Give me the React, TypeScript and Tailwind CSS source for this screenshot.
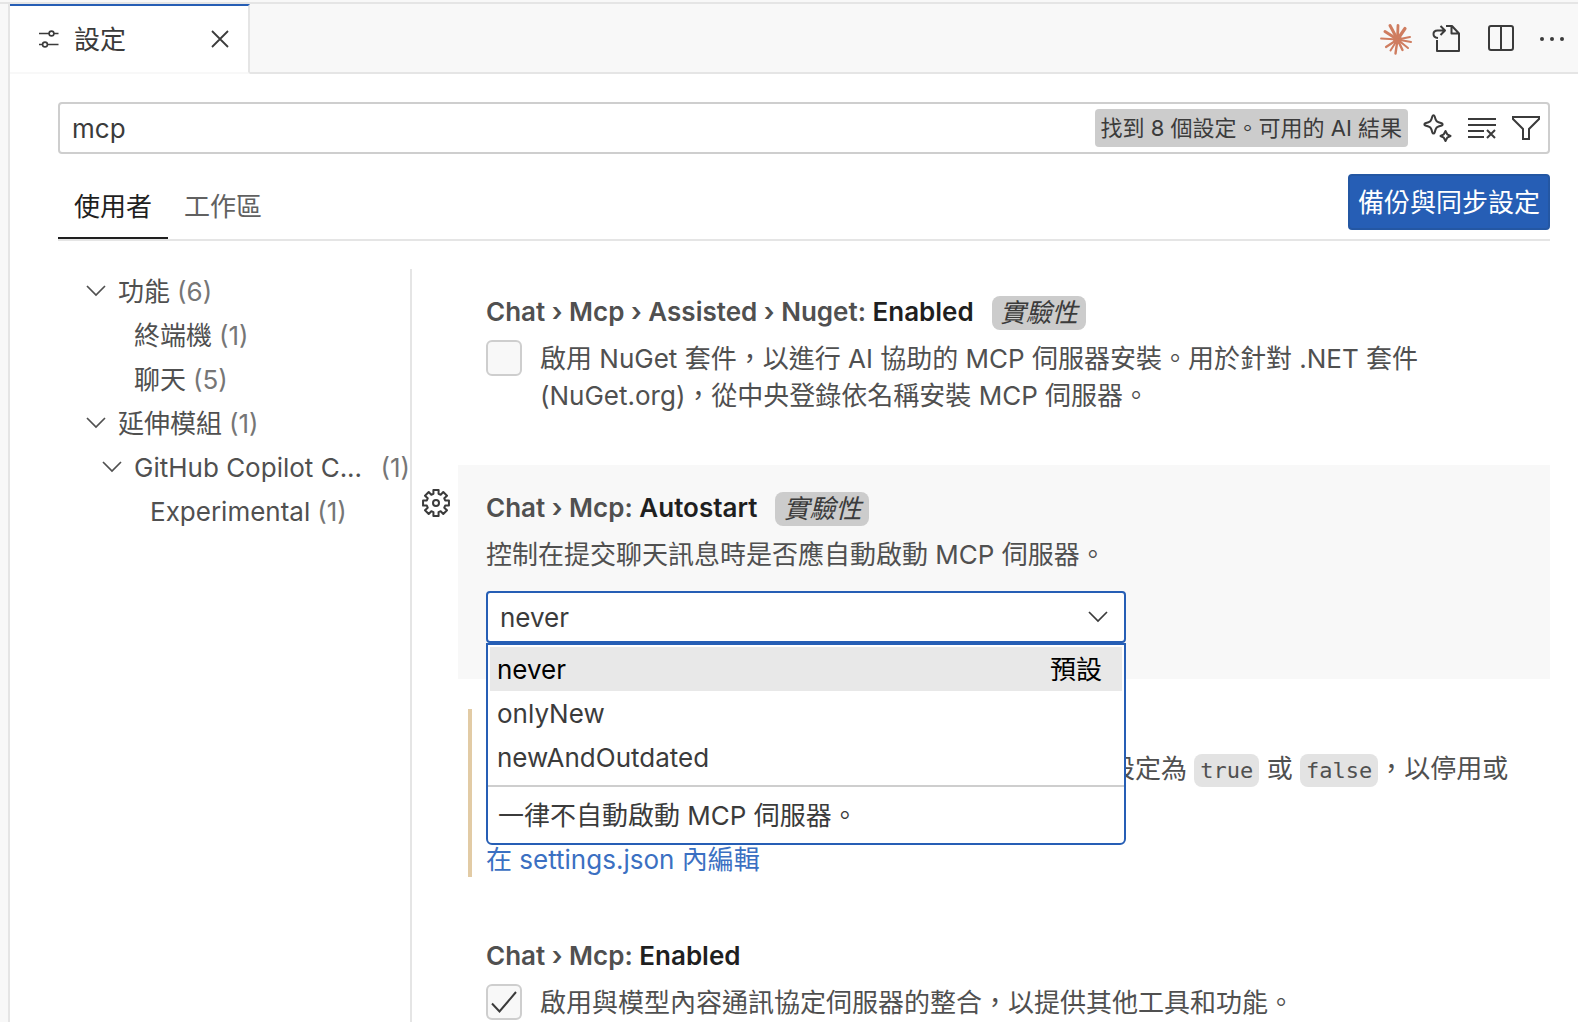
import React from "react";

const stroke = {
  fill: "none",
  stroke: "currentColor",
  strokeWidth: 2,
} as const;

function SlidersIcon() {
  return (
    <svg width="22" height="22" viewBox="0 0 22 22" {...stroke} strokeWidth={1.6} aria-hidden="true">
      <path d="M1 5.5h10M16 5.500h4.500M1 16.500h3.500M9.500 16.500h11" />
      <circle cx="13.500" cy="5.500" r="2.400" />
      <circle cx="7" cy="16.500" r="2.400" />
    </svg>
  );
}

function CloseIcon() {
  return (
    <svg width="18" height="18" viewBox="0 0 18 18" {...stroke} strokeWidth={1.8} aria-hidden="true">
      <path d="M1 1l16 16M17 1L1 17" />
    </svg>
  );
}

const rays = [
  [5, 8.5, 3], [10, 2.5, 3], [18, 2.5, 2.8], [25, 5.5, 3.2], [30, 14, 2], [31, 19, 2],
  [28, 25, 2], [22.5, 27, 2.4], [15.5, 30.5, 2.4], [10.5, 27.5, 2], [6, 24, 2.2], [1, 15.500, 1.8],
];

function BurstIcon() {
  return (
    <svg width="32" height="32" viewBox="0 0 32 32" fill="#cf7d60" stroke="#cf7d60" strokeLinecap="round" aria-hidden="true">
      <circle cx="17.500" cy="16.500" r="4" />
      {rays.map(([x, y, w]) => (
        <path key={`${x}-${y}`} d={`M17.500 16.500L${x} ${y}`} strokeWidth={w} />
      ))}
    </svg>
  );
}

function OpenFileIcon() {
  return (
    <svg width="32" height="32" viewBox="0 0 32 32" {...stroke} strokeLinejoin="round" aria-hidden="true">
      <path d="M5 17v11h22V10.500L20 3h-6M19.500 3v7.500H27" />
      <path d="M6 15c-3-.3-4.500-2-4.500-4s1.500-3.500 4-3.500H13M8.500 3l4.500 4.500-4.500 4.500" />
    </svg>
  );
}

function SplitIcon() {
  return (
    <svg width="32" height="32" viewBox="0 0 32 32" {...stroke} aria-hidden="true">
      <rect x="4" y="3" width="24" height="24" rx="2" />
      <path d="M16 3v24" />
    </svg>
  );
}

function DotsIcon() {
  return (
    <svg width="32" height="32" viewBox="0 0 32 32" fill="currentColor" aria-hidden="true">
      <circle cx="6" cy="16" r="2" />
      <circle cx="16" cy="16" r="2" />
      <circle cx="26" cy="16" r="2" />
    </svg>
  );
}

function SparkleIcon() {
  return (
    <svg width="32" height="32" viewBox="0 0 32 32" {...stroke} strokeLinejoin="round" aria-hidden="true">
      <path d="M11.500 3.200c.6 0 .9.400 1.100 1l1 3.200q.7 2.200 2.900 2.900l3.200 1c1.200.4 1.200 1.800 0 2.200l-3.200 1q-2.200.7-2.900 2.900l-1 3.200c-.4 1.200-1.800 1.200-2.200 0l-1-3.200q-.7-2.200-2.900-2.900l-3.200-1c-1.200-.4-1.200-1.800 0-2.200l3.200-1q2.200-.7 2.900-2.900l1-3.200c.2-.6.5-1 1.100-1z" />
      <path d="M23.500 19l1.700 3.300 3.300 1.700-3.300 1.700-1.700 3.300-1.700-3.300-3.300-1.700 3.300-1.700z" />
    </svg>
  );
}

function ClearIcon() {
  return (
    <svg width="32" height="32" viewBox="0 0 32 32" {...stroke} aria-hidden="true">
      <path d="M2 7h28M2 13h28M2 19h16M2 25h16M21 18l8 8M29 18l-8 8" />
    </svg>
  );
}

function FilterIcon() {
  return (
    <svg width="32" height="32" viewBox="0 0 32 32" {...stroke} aria-hidden="true">
      <path d="M3 5h26v2L19 17v10h-6V17L3 7z" />
    </svg>
  );
}

function GearIcon() {
  const teeth = Array.from({ length: 8 }, (_, i) => {
    const c = (i * Math.PI) / 4 - Math.PI / 2;
    const at = (r: number, d: number) =>
      `${(16 + r * Math.cos(c + d)).toFixed(2)} ${(16 + r * Math.sin(c + d)).toFixed(2)}`;
    return `${at(9.5, -0.27)} L${at(13.2, -0.2)} L${at(13.2, 0.2)} L${at(9.5, 0.27)}`;
  }).join(" L");
  return (
    <svg width="32" height="32" viewBox="0 0 32 32" {...stroke} strokeLinejoin="round" aria-hidden="true">
      <path d={`M${teeth}Z`} />
      <circle cx="16" cy="16" r="3" />
    </svg>
  );
}

function Chevron() {
  return (
    <svg width="20" height="12" viewBox="0 0 20 12" {...stroke} strokeWidth={1.7} className="shrink-0" aria-hidden="true">
      <path d="M1 1l9 9 9-9" />
    </svg>
  );
}

type TreeRow = { label: string; count: number; pad: string; open?: boolean; wide?: boolean };

const tree: TreeRow[] = [
  { label: "功能", count: 6, pad: "pl-[28px]", open: true },
  { label: "終端機", count: 1, pad: "pl-[76px]" },
  { label: "聊天", count: 5, pad: "pl-[76px]" },
  { label: "延伸模組", count: 1, pad: "pl-[28px]", open: true },
  { label: "GitHub Copilot C...", count: 1, pad: "pl-[44px]", open: true, wide: true },
  { label: "Experimental", count: 1, pad: "pl-[92px]" },
];

function Sidebar() {
  return (
    <nav aria-label="設定類別" className="w-[354px] shrink-0 border-r-2 border-[#e5e5e5]">
      {tree.map((r) => (
        <button
          key={r.label}
          type="button"
          className={`flex h-11 w-full items-center whitespace-nowrap text-left text-[#505050] ${r.pad}`}
        >
          {r.open && (
            <span className="mr-3 flex">
              <Chevron />
            </span>
          )}
          <span className="truncate">{r.label}</span>
          <span className={r.wide ? "ml-auto text-[#767676]" : "ml-[7px] text-[#767676]"}>({r.count})</span>
        </button>
      ))}
    </nav>
  );
}

function Title({ path, name, tag }: { path: string; name: string; tag?: boolean }) {
  return (
    <h3 className="flex h-[34px] items-center whitespace-nowrap font-semibold text-[#505050]">
      <span className="pb-1">
        {path} <span className="text-[#1f1f1f]">{name}</span>
      </span>
      {tag && (
        <span className="ml-[18px] flex h-[34px] items-center rounded-lg bg-[#cccccc] px-2 pb-0.5 font-normal italic text-[#3b3b3b]">
          實驗性
        </span>
      )}
    </h3>
  );
}

function Check({ id, label, checked }: { id: string; label: React.ReactNode; checked?: boolean }) {
  return (
    <div className="mt-2.5 flex gap-[18px]">
      <span className="relative flex size-9 shrink-0">
        <input
          id={id}
          type="checkbox"
          defaultChecked={checked}
          className="peer size-9 appearance-none rounded-md border-2 border-[#cecece] bg-[#f8f8f8]"
        />
        <svg
          viewBox="0 0 36 36"
          {...stroke}
          className="pointer-events-none absolute inset-0 hidden text-[#3b3b3b] peer-checked:block"
          aria-hidden="true"
        >
          <path d="M6 19.500l7.500 8L30 8" />
        </svg>
      </span>
      <label htmlFor={id} className="leading-[37px]">
        {label}
      </label>
    </div>
  );
}

function Code({ children }: { children: React.ReactNode }) {
  return (
    <code className="rounded-lg bg-[#e3e3e3] px-1.5 py-1 font-['DejaVu_Sans_Mono',monospace] text-[22px]">
      {children}
    </code>
  );
}

function Dropdown() {
  return (
    <div className="relative mt-[18px] w-[640px] text-[#3b3b3b]">
      <select
        aria-label="Autostart"
        defaultValue="never"
        className="block h-[52px] w-full appearance-none rounded-sm border-2 border-[#265eb5] bg-white px-3 outline-none"
      >
        <option value="never">never</option>
        <option value="onlyNew">onlyNew</option>
        <option value="newAndOutdated">newAndOutdated</option>
      </select>
      <span className="pointer-events-none absolute right-[18px] top-5">
        <Chevron />
      </span>
      <div className="absolute inset-x-0 top-[52px] z-10 rounded-b-md border-2 border-[#265eb5] bg-white">
        <div role="listbox" aria-label="Autostart" className="p-0.5">
          <button
            type="button"
            role="option"
            aria-selected="true"
            className="flex h-11 w-full items-center justify-between bg-[#e8e8e8] pl-[7px] pr-5 text-black"
          >
            <span>never</span>
            <span>預設</span>
          </button>
          <button type="button" role="option" aria-selected="false" className="flex h-11 w-full items-center pl-[7px]">
            onlyNew
          </button>
          <button type="button" role="option" aria-selected="false" className="flex h-11 w-full items-center pl-[7px]">
            newAndOutdated
          </button>
        </div>
        <p className="mt-1 flex h-[58px] items-center border-t-2 border-[#cecece] px-2.5">
          一律不自動啟動 MCP 伺服器。
        </p>
      </div>
    </div>
  );
}

const iconButton = "flex size-8 items-center justify-center";

export default function App() {
  return (
    <div
      lang="zh-Hant"
      className="flex h-screen flex-col overflow-hidden bg-[#f8f8f8] pt-0.5 font-['Inter','Noto_Sans_CJK_TC',sans-serif] text-[26px] text-[#3b3b3b]"
    >
      <div className="flex min-h-0 flex-1 border-t-2 border-[#e5e5e5] pl-2">
        <main className="flex min-w-0 flex-1 flex-col border-l-2 border-[#e5e5e5] bg-white">
          <header className="flex h-[70px] shrink-0 bg-[#f8f8f8]">
            <div className="flex w-60 shrink-0 items-center border-b-2 border-r-2 border-t-2 border-b-[#f8f8f8] border-r-[#e5e5e5] border-t-[#265eb5] bg-white pl-7 pr-[19px]">
              <SlidersIcon />
              <span className="ml-3.5">設定</span>
              <button type="button" aria-label="關閉" className="ml-auto">
                <CloseIcon />
              </button>
            </div>
            <div className="flex flex-1 items-center justify-end border-b-2 border-[#e5e5e5] pr-2.5 pt-0.5">
              <button type="button" aria-label="Claude" className={iconButton}>
                <BurstIcon />
              </button>
              <button type="button" aria-label="開啟設定 (JSON)" className={`${iconButton} ml-5`}>
                <OpenFileIcon />
              </button>
              <button type="button" aria-label="分割編輯器" className={`${iconButton} ml-[21px]`}>
                <SplitIcon />
              </button>
              <button type="button" aria-label="更多動作" className={`${iconButton} ml-[19px]`}>
                <DotsIcon />
              </button>
            </div>
          </header>

          <div className="flex min-h-0 flex-1 flex-col pl-12 pr-7 pt-7">
            <div className="flex h-[52px] shrink-0 items-center rounded-sm border-2 border-[#cecece] bg-white pl-3 pr-1.5">
              <input
                type="text"
                aria-label="搜尋設定"
                defaultValue="mcp"
                className="h-full min-w-0 flex-1 bg-transparent outline-none"
              />
              <span className="flex h-[38px] items-center whitespace-nowrap rounded-sm bg-[#cccccc] px-1.5 text-[22px]">
                找到 8 個設定。可用的 AI 結果
              </span>
              <div className="ml-3.5 flex gap-3">
                <button type="button" aria-label="AI 搜尋" className={iconButton}>
                  <SparkleIcon />
                </button>
                <button type="button" aria-label="清除搜尋" className={iconButton}>
                  <ClearIcon />
                </button>
                <button type="button" aria-label="篩選" className={iconButton}>
                  <FilterIcon />
                </button>
              </div>
            </div>

            <div className="mt-5 flex h-[67px] shrink-0 items-start justify-between border-b-2 border-[#e5e5e5]">
              <div className="flex h-[65px] self-start">
                <button type="button" className="border-b-2 border-[#1f1f1f] px-4 pt-0.5 text-[#1f1f1f]">
                  使用者
                </button>
                <button type="button" className="border-b-2 border-transparent px-4 pt-0.5 text-[#616161]">
                  工作區
                </button>
              </div>
              <button
                type="button"
                className="h-14 rounded border-2 border-[#2457a3] bg-[#265eb5] px-2 text-white"
              >
                備份與同步設定
              </button>
            </div>

            <div className="mt-7 flex min-h-0 flex-1">
              <Sidebar />
              <div className="min-w-0 flex-1 pl-[46px] text-[#505050]">
                <section className="h-[196px] px-7 pt-[27px]">
                  <Title path="Chat › Mcp › Assisted › Nuget:" name="Enabled" tag />
                  <Check
                    id="nuget"
                    label={
                      <>
                        啟用 NuGet 套件，以進行 AI 協助的 MCP 伺服器安裝。用於針對 .NET 套件
                        <br />
                        (NuGet.org)，從中央登錄依名稱安裝 MCP 伺服器。
                      </>
                    }
                  />
                </section>

                <section className="relative h-[214px] bg-[#f8f8f8] px-7 pt-[27px]">
                  <button
                    type="button"
                    aria-label="更多動作"
                    className="absolute -left-[38px] top-[22px] text-[#3b3b3b]"
                  >
                    <GearIcon />
                  </button>
                  <Title path="Chat › Mcp:" name="Autostart" tag />
                  <p className="mt-2.5 leading-[37px]">控制在提交聊天訊息時是否應自動啟動 MCP 伺服器。</p>
                  <Dropdown />
                </section>

                <section className="relative h-[234px] px-7 pt-[71px]">
                  <span className="absolute bottom-9 left-2.5 top-[30px] w-1 bg-[#e2cba5]" />
                  <p className="whitespace-nowrap pl-[623px] leading-[37px]">
                    設定為 <Code>true</Code> 或 <Code>false</Code>，以停用或
                  </p>
                  <a href="#settings-json" className="mt-[52px] block w-fit leading-[37px] text-[#3b70c2]">
                    在 settings.json 內編輯
                  </a>
                </section>

                <section className="h-[160px] px-7 pt-[27px]">
                  <Title path="Chat › Mcp:" name="Enabled" />
                  <Check id="mcp-enabled" checked label="啟用與模型內容通訊協定伺服器的整合，以提供其他工具和功能。" />
                </section>
              </div>
            </div>
          </div>
        </main>
      </div>
    </div>
  );
}
